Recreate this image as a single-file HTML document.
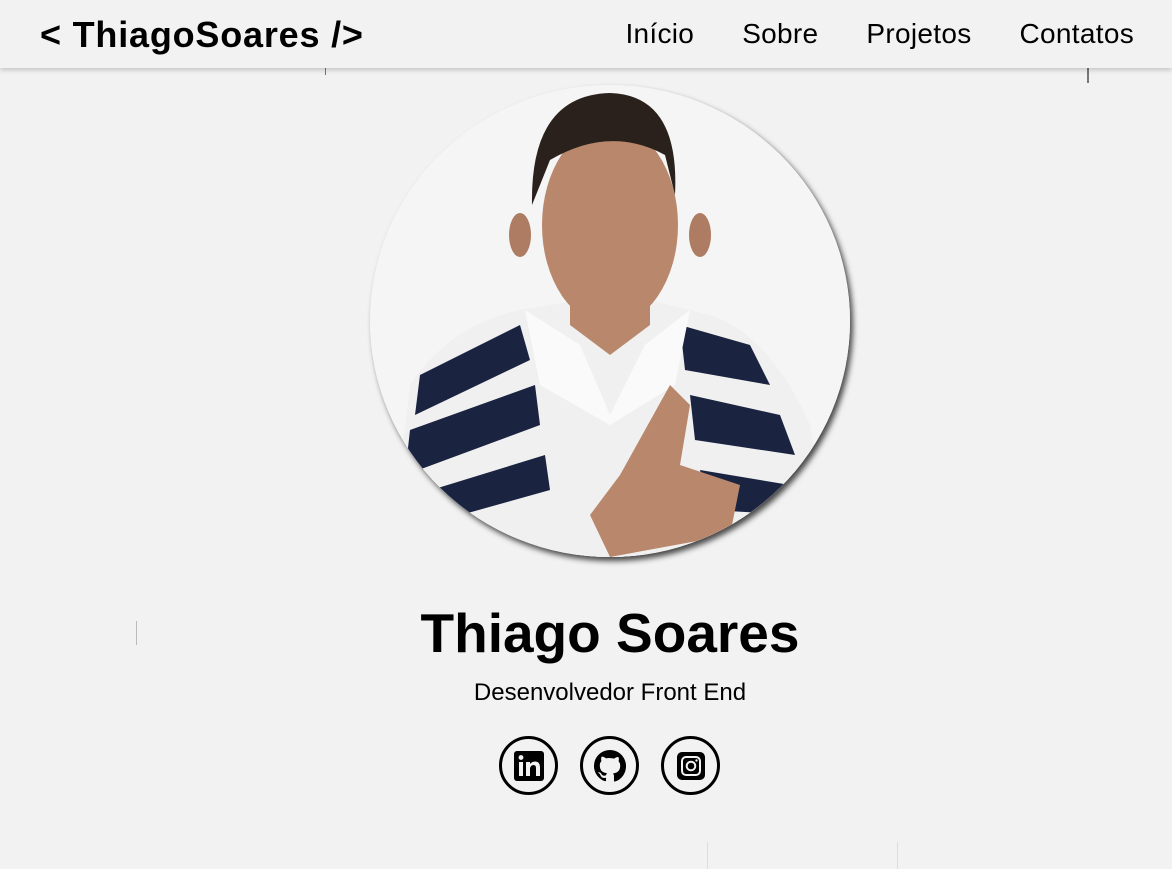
<!DOCTYPE html>
<html><head><meta charset="utf-8"><style>
*{margin:0;padding:0;box-sizing:border-box}
body{width:1172px;height:869px;background:#f2f2f2;font-family:"Liberation Sans",sans-serif;overflow:hidden;position:relative;color:#000}
header{position:absolute;left:0;top:0;width:1172px;height:68px;background:#f2f2f2;box-shadow:0 2px 5px rgba(0,0,0,.2);z-index:2}
.logo{position:absolute;left:40px;top:14px;font-size:36px;font-weight:bold;letter-spacing:0.8px;white-space:nowrap}
nav{position:absolute;right:38px;top:18px;font-size:28px;white-space:nowrap}
nav span{margin-left:48px;letter-spacing:0.3px}
.photo{position:absolute;left:370px;top:85px;width:480px;height:472px;border-radius:50%;overflow:hidden;background:#f4f4f4;box-shadow:3px 4px 6px rgba(0,0,0,.7)}
h1{position:absolute;left:0;width:1220px;text-align:center;top:601px;font-size:55px;font-weight:bold}
.sub{position:absolute;left:0;width:1220px;text-align:center;top:679px;font-size:24px}
.ic{position:absolute;top:736px;width:59px;height:59px;border:3px solid #000;border-radius:50%;display:flex;align-items:center;justify-content:center}
.line{position:absolute;background:#bbb;width:1px}
</style></head><body>
<header><div class="logo">&lt; ThiagoSoares /&gt;</div>
<nav><span>Início</span><span>Sobre</span><span>Projetos</span><span>Contatos</span></nav></header>
<div class="line" style="left:325px;top:68px;height:7px;background:#777"></div>
<div class="line" style="left:1087px;top:68px;height:15px;width:2px;background:#777"></div>
<div class="line" style="left:136px;top:621px;height:24px"></div>
<div class="line" style="left:707px;top:842px;height:27px;background:#ddd"></div>
<div class="line" style="left:897px;top:842px;height:27px;background:#ddd"></div>
<div class="photo"><svg width="480" height="472" viewBox="0 0 480 472">
<rect width="480" height="472" fill="#f5f5f5"/>
<path d="M40 300 Q80 240 150 225 L210 215 L280 215 L340 230 Q400 250 440 340 L460 472 L20 472 Z" fill="#f0f0f0"/>
<g fill="#1a2340">
<path d="M50 290 L150 240 L160 275 L45 330 Z"/>
<path d="M40 345 L165 300 L170 340 L35 390 Z"/>
<path d="M45 410 L175 370 L180 405 L55 440 Z"/>
<path d="M310 240 L380 260 L400 300 L315 285 Z"/>
<path d="M320 310 L410 330 L425 370 L325 355 Z"/>
<path d="M330 385 L420 400 L430 430 L340 425 Z"/>
</g>
<path d="M155 225 L210 260 L240 330 L275 260 L320 225 L305 300 L240 340 L170 300 Z" fill="#fafafa"/>
<path d="M200 240 L240 270 L280 240 L280 200 L200 200 Z" fill="#b8876c"/>
<ellipse cx="240" cy="140" rx="68" ry="100" fill="#b8876c"/>
<path d="M162 120 Q160 10 240 8 Q310 10 305 110 L295 70 Q240 40 180 75 Z" fill="#2b211c"/>
<ellipse cx="150" cy="150" rx="11" ry="22" fill="#ad7c62"/>
<ellipse cx="330" cy="150" rx="11" ry="22" fill="#ad7c62"/>
<path d="M250 390 L300 300 L320 320 L310 380 L370 400 L360 450 L240 472 L220 430 Z" fill="#b8876c"/>
</svg></div>
<h1>Thiago Soares</h1>
<div class="sub">Desenvolvedor Front End</div>
<div class="ic" style="left:499px"><svg width="32" height="32" viewBox="0 0 32 32"><rect x="1" y="1" width="30" height="30" rx="3"/><rect x="6" y="12" width="4" height="14" fill="#f2f2f2"/><circle cx="8" cy="7.5" r="2.4" fill="#f2f2f2"/><path d="M13 12h4v2q2-2.5 5-2.5q5 0 5 6V26h-4v-8q0-3-2.5-3T17 18v8h-4z" fill="#f2f2f2"/></svg></div>
<div class="ic" style="left:580px"><svg width="32" height="32" viewBox="0 0 16 16"><path d="M8 0C3.58 0 0 3.58 0 8c0 3.54 2.290 6.53 5.47 7.59.4.07.55-.17.55-.38v-1.33c-2.23.48-2.7-1.07-2.7-1.07-.36-.92-.89-1.17-.89-1.170-.73-.5.06-.49.06-.49.8.06 1.23.83 1.23.83.71 1.22 1.87.87 2.33.66.07-.52.28-.87.5-1.07-1.78-.2-3.64-.89-3.64-3.950 0-.87.31-1.59.82-2.150-.08-.2-.36-1.02.08-2.12 0 0 .67-.21 2.2.82A7.6 7.6 0 0 1 8 4.04c.68 0 1.36.09 2 .27 1.53-1.04 2.2-.82 2.2-.82.44 1.1.16 1.92.08 2.12.51.56.82 1.27.82 2.15 0 3.07-1.87 3.75-3.65 3.95.29.25.54.73.54 1.48v2.2c0 .21.15.46.55.38A8 8 0 0 0 16 8c0-4.42-3.58-8-8-8z"/></svg></div>
<div class="ic" style="left:661px"><svg width="30" height="30" viewBox="0 0 30 30"><rect x="1" y="1" width="28" height="28" rx="5"/><rect x="6" y="6" width="18" height="18" rx="4" fill="none" stroke="#f2f2f2" stroke-width="2"/><circle cx="15" cy="15" r="4.3" fill="none" stroke="#f2f2f2" stroke-width="2"/><circle cx="20.5" cy="9.5" r="1.2" fill="#f2f2f2"/></svg></div>
</body></html>
